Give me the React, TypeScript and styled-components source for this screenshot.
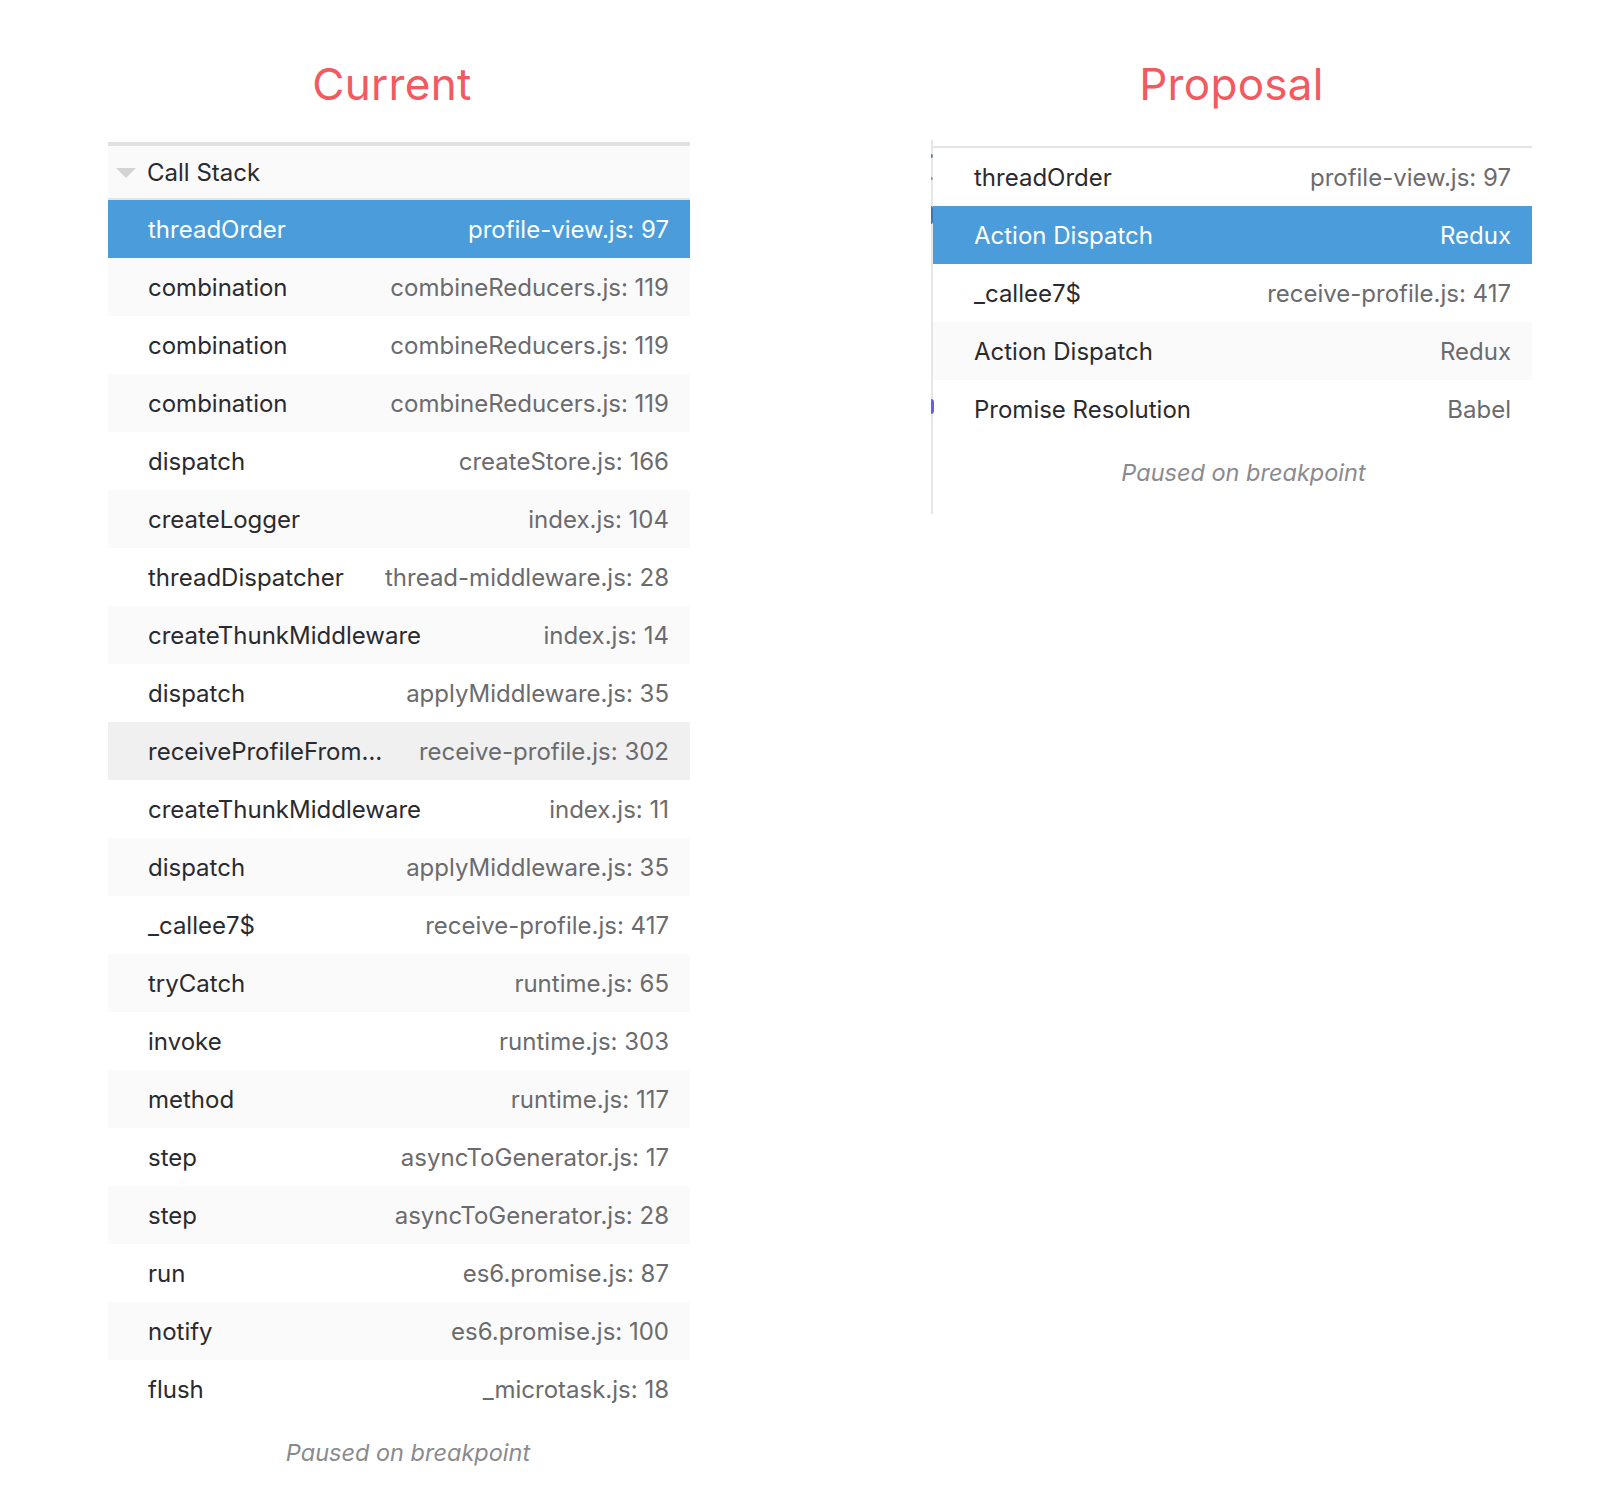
import React from "react";
import styled, { createGlobalStyle } from "styled-components";

const Global = createGlobalStyle`
  html, body { margin: 0; padding: 0; background: #ffffff; }
  body { font-family: Inter, "Noto Sans", sans-serif; -webkit-font-smoothing: antialiased; }
`;

const Page = styled.div`
  display: flex;
  align-items: flex-start;
  padding-left: 108px;
  gap: 241px;
  width: 1602px;
  height: 1500px;
  box-sizing: border-box;
`;

const Column = styled.div<{ $width: number }>`
  width: ${(p) => p.$width}px;
  display: flex;
  flex-direction: column;
`;

const Title = styled.h1<{ $shift?: number }>`
  margin: 62px 0 0 ${(p) => p.$shift ?? 0}px;
  height: 44px;
  font-size: 44px;
  line-height: 44px;
  font-weight: 400;
  color: #f25a5f;
  text-align: center;
  letter-spacing: 0.3px;
`;

const Panel = styled.div`
  margin-top: 36px;
  display: flex;
  flex-direction: column;
`;

const Header = styled.div`
  display: flex;
  align-items: center;
  height: 52px;
  background: #fafafa;
  border-top: 4px solid #e1e1e3;
  border-bottom: 2px solid #e4e4e6;
  padding-left: 8px;
  gap: 11px;
  font-size: 24px;
  color: #2a2a2e;
`;

const Triangle = styled.span`
  width: 0;
  height: 0;
  border-left: 10px solid transparent;
  border-right: 10px solid transparent;
  border-top: 10px solid #d3d3d6;
  margin-top: 2px;
`;

const List = styled.div<{ $border?: boolean }>`
  display: flex;
  flex-direction: column;
  ${(p) => (p.$border ? "border-top: 2px solid #e4e4e6;" : "")}
`;

type Tone = "plain" | "alt" | "hover" | "selected";

const Row = styled.div<{ $tone: Tone; $pad: number }>`
  display: flex;
  align-items: center;
  justify-content: space-between;
  height: 58px;
  padding: 0 21px 0 ${(p) => p.$pad}px;
  gap: 30px;
  font-size: 24px;
  background: ${(p) =>
    p.$tone === "selected"
      ? "#4a9cda"
      : p.$tone === "hover"
      ? "#f0f0f1"
      : p.$tone === "alt"
      ? "#fafafa"
      : "#ffffff"};
`;

const Name = styled.span<{ $selected: boolean }>`
  color: ${(p) => (p.$selected ? "#ffffff" : "#2a2a2e")};
  white-space: nowrap;
`;

const Location = styled.span<{ $selected: boolean }>`
  color: ${(p) => (p.$selected ? "#ffffff" : "#6b6b6e")};
  white-space: nowrap;
  flex-shrink: 0;
`;

const Footer = styled.div<{ $top: number; $shift?: number }>`
  margin-top: ${(p) => p.$top}px;
  margin-left: ${(p) => p.$shift ?? 0}px;
  text-align: center;
  font-size: 23.5px;
  font-style: italic;
  color: #8a8a8e;
  line-height: 26px;
`;

const ProposalFrame = styled.div`
  position: relative;
  margin-top: 34px;
  border-left: 2px solid #e6e6e8;
  padding-top: 6px;
  height: 374px;
  box-sizing: border-box;
`;

const Mark = styled.span<{ $top: number; $h: number; $color: string; $w?: number }>`
  position: absolute;
  left: -2px;
  top: ${(p) => p.$top}px;
  width: ${(p) => p.$w ?? 2}px;
  height: ${(p) => p.$h}px;
  background: ${(p) => p.$color};
  border-radius: 0 3px 3px 0;
`;

const current: [string, string][] = [
  ["threadOrder", "profile-view.js: 97"],
  ["combination", "combineReducers.js: 119"],
  ["combination", "combineReducers.js: 119"],
  ["combination", "combineReducers.js: 119"],
  ["dispatch", "createStore.js: 166"],
  ["createLogger", "index.js: 104"],
  ["threadDispatcher", "thread-middleware.js: 28"],
  ["createThunkMiddleware", "index.js: 14"],
  ["dispatch", "applyMiddleware.js: 35"],
  ["receiveProfileFrom…", "receive-profile.js: 302"],
  ["createThunkMiddleware", "index.js: 11"],
  ["dispatch", "applyMiddleware.js: 35"],
  ["_callee7$", "receive-profile.js: 417"],
  ["tryCatch", "runtime.js: 65"],
  ["invoke", "runtime.js: 303"],
  ["method", "runtime.js: 117"],
  ["step", "asyncToGenerator.js: 17"],
  ["step", "asyncToGenerator.js: 28"],
  ["run", "es6.promise.js: 87"],
  ["notify", "es6.promise.js: 100"],
  ["flush", "_microtask.js: 18"],
];

const proposal: [string, string][] = [
  ["threadOrder", "profile-view.js: 97"],
  ["Action Dispatch", "Redux"],
  ["_callee7$", "receive-profile.js: 417"],
  ["Action Dispatch", "Redux"],
  ["Promise Resolution", "Babel"],
];

function toneFor(i: number, selected: number, hover: number): Tone {
  if (i === selected) return "selected";
  if (i === hover) return "hover";
  return i % 2 === 1 ? "alt" : "plain";
}

export default function App() {
  return (
    <>
      <Global />
      <Page>
        <Column $width={582}>
          <Title $shift={-14}>Current</Title>
          <Panel>
            <Header>
              <Triangle />
              <span>Call Stack</span>
            </Header>
            <List>
              {current.map(([name, loc], i) => {
                const tone = toneFor(i, 0, 9);
                const sel = tone === "selected";
                return (
                  <Row key={i} $tone={tone} $pad={40}>
                    <Name $selected={sel}>{name}</Name>
                    <Location $selected={sel}>{loc}</Location>
                  </Row>
                );
              })}
            </List>
            <Footer $top={22} $shift={18}>Paused on breakpoint</Footer>
          </Panel>
        </Column>
        <Column $width={601}>
          <Title>Proposal</Title>
          <ProposalFrame>
            <Mark $top={14} $h={4} $color="#5a7fb0" />
            <Mark $top={37} $h={3} $color="#8aa0c0" />
            <Mark $top={66} $h={18} $color="#3a78b8" />
            <Mark $top={259} $h={15} $color="#6a5cf0" $w={3} />
            <List $border>
              {proposal.map(([name, loc], i) => {
                const tone = toneFor(i, 1, -1);
                const sel = tone === "selected";
                return (
                  <Row key={i} $tone={tone} $pad={41}>
                    <Name $selected={sel}>{name}</Name>
                    <Location $selected={sel}>{loc}</Location>
                  </Row>
                );
              })}
            </List>
            <Footer $top={22} $shift={22}>Paused on breakpoint</Footer>
          </ProposalFrame>
        </Column>
      </Page>
    </>
  );
}
